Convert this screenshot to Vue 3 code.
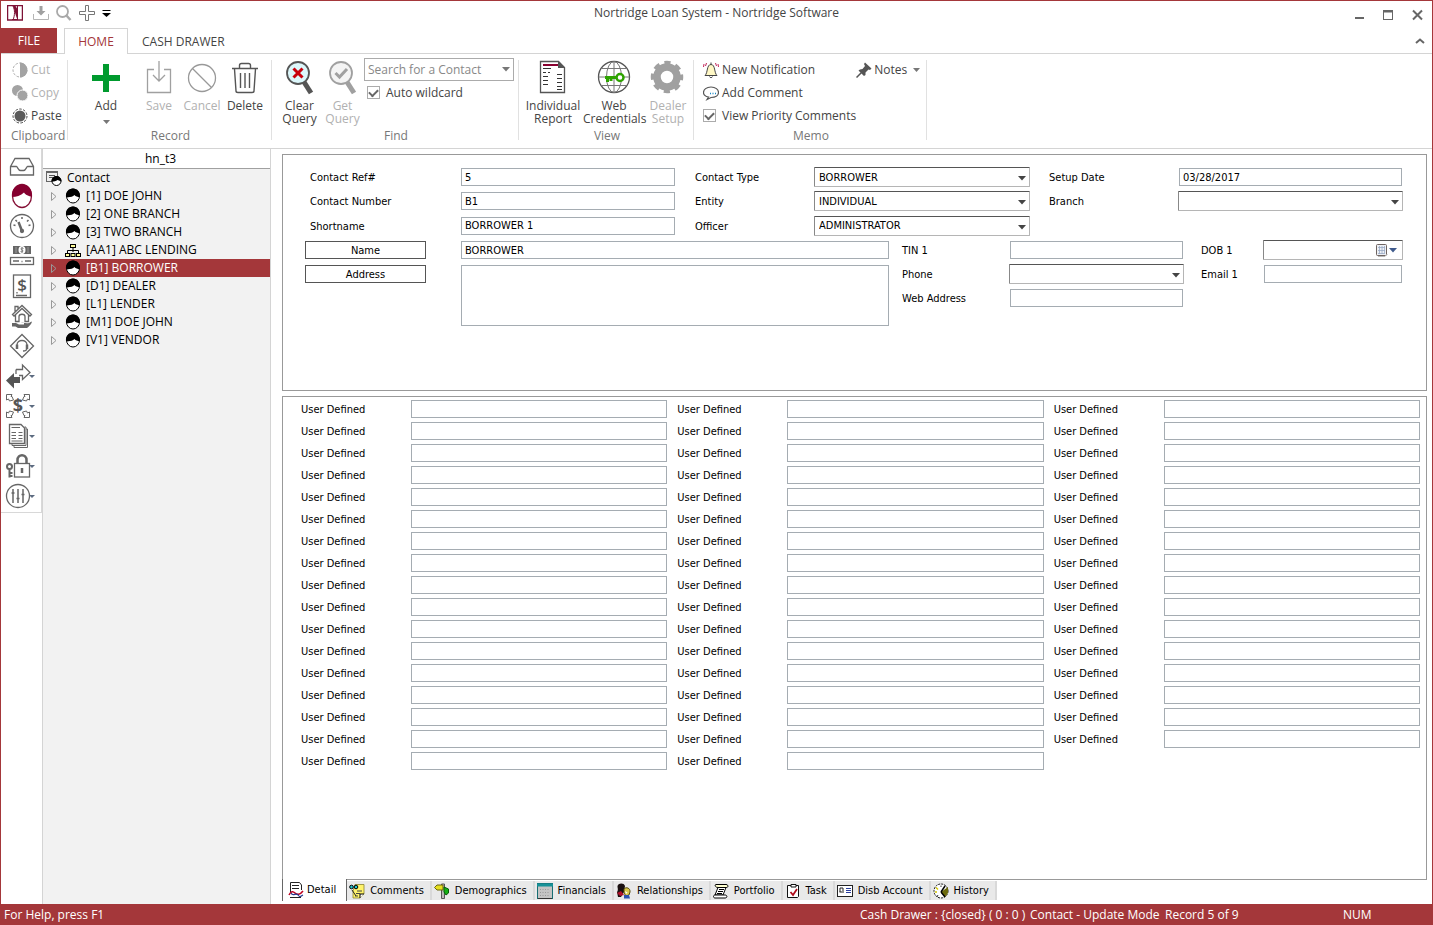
<script setup>
import { ref } from 'vue'

const sideTools = [
  { name: 'Inbox', svg: '<path d="M3.5 15.5L8 7.5H22L26.5 15.5V24H3.5ZM3.5 15.5H9.5C10.5 15.5 11 19.500 13.500 19.500H16.500C19 19.500 19.500 15.500 20.500 15.500H26.500"/>' },
  { name: 'Contacts', svg: '<ellipse cx="15" cy="15" rx="9.500" ry="11.500" stroke="#850f35" fill="#fff"/><path d="M5 16C4 8 9 3.500 15 3.500S26 8 25 16C22 15 18 14 17 11.500C14 14.500 9 16 5 16Z" fill="#85002f" stroke="none"/>' },
  { name: 'Dashboard', svg: '<circle cx="15" cy="15" r="11.500"/><circle cx="15" cy="20" r="1.500" fill="#666"/><path d="M11.500 11L15 20" stroke-width="2.500"/><path d="M6.500 14L8.500 14.500M8.500 9L10 10.500M15 6V8M21.500 9L20 10.500M23.500 14L21.500 14.500" stroke-width="1.500"/>' },
  { name: 'Cash drawer', svg: '<rect x="6" y="5" width="18" height="8" fill="#666" stroke="none"/><ellipse cx="15" cy="9" rx="3.500" ry="4" fill="#fff" stroke="none"/><path d="M16.500 7.500C14 6 13 8.500 15 9S16 11.500 13.500 10.500M15 6V12" stroke-width="0.800"/><path d="M9 6V12M21 6V12" stroke="#aaa" stroke-width="0.800"/><rect x="3.500" y="16.500" width="23" height="7"/><path d="M6 20H12M18 20H24M14.500 20.500H15.500" />' },
  { name: 'Loans', svg: '<rect x="6.500" y="4" width="17" height="22.500"/><text x="15" y="20" text-anchor="middle" font-size="17" font-family="Open Sans, sans-serif" font-weight="600" fill="#555" stroke="none">$</text><path d="M9 24.500H20M10 21V22.500" stroke-width="1.300"/>' },
  { name: 'Collateral', svg: '<path d="M5.500 13.500L15 4.500L24.500 13.500L23 15L15 7.500L7 15ZM8.500 14V20.500H12V15.500C12 12.500 18 12.500 18 15.500V20.500H21.500V14M8 10.500V5.500H11V8"/><path d="M5 22H9L12 23.500H17V22H14C18 21 20 24 24.500 20.500C25.500 21 24 24 20 27H11L8.500 25.500H5Z" fill="#666" stroke="none"/>' },
  { name: 'Support', svg: '<path d="M15 3.500L26.500 15L15 26.500L3.500 15Z"/><path d="M10 17V14C10 8 20 8 20 14V17C20 19.500 18 20 16 20"/><path d="M10 13.500V18M20 13.500V18" stroke-width="2.500"/>' },
  { name: 'Transactions', menu: true, svg: '<path d="M13 8.500H19.500V4L27 11.500L19.500 18.500V14.500H16" /><path d="M3 19.500L11 12V16H17V22H11V27.500Z" fill="#555" stroke="none"/><path d="M13 8.500V13"/>' },
  { name: 'Payments', menu: true, svg: '<path d="M3.500 9V3.500H9M3.500 9L5.500 8L6.500 10L10.500 9L9 5.500L8 5.500L9 3.500M21 3.500H26.500V9M26.500 9L24.500 8L23.500 10L19.500 9L21 5.500L22 5.500L21 3.500M3.500 21V26.500H9M3.500 21L5.500 22L6.500 20L10.500 21L9 24.500L8 24.500L9 26.500M26.500 21V26.500H21M26.500 21L24.500 22L23.500 20L19.500 21L21 24.500L22 24.500L21 26.500" stroke-width="1"/><text x="15" y="21" text-anchor="middle" font-size="18" font-family="Open Sans, sans-serif" font-weight="700" fill="#555" stroke="none">$</text>' },
  { name: 'Reports', menu: true, svg: '<path d="M6.500 3.500H18L21.500 7V22.500H6.500Z"/><path d="M21.500 6H23V24.500H9V22.500M23 8H24.500V26.500H11V24.500" stroke-width="1"/><path d="M8.500 6.500H17M8.500 11.500H13M15.500 11.500H19.500M8.500 14.500H13M15.500 14.500H19.500M8.500 17.500H13M15.500 17.500H19.500M8.500 20H19.500" stroke-width="1"/>' },
  { name: 'Security', menu: true, svg: '<rect x="11.500" y="12.500" width="15" height="13.500"/><path d="M14.500 12V9C14.500 2.500 23.500 2.500 23.500 9V12" stroke-width="2.500"/><path d="M19 17V22" stroke-width="2.500"/><circle cx="6.500" cy="15.500" r="2.500" stroke-width="2"/><path d="M6.500 18V26.500M6.500 22H9.500M6.500 25H9.500" stroke-width="2"/>' },
  { name: 'Settings', menu: true, svg: '<circle cx="15" cy="15" r="11.500"/><path d="M10 8V22M15 8V22M20 8V22M8.500 12H11.500M13.500 17.500H16.500M18.500 13.500H21.500" stroke-width="1.500"/>' },
]

const head = '<ellipse cx="8" cy="8" rx="6.500" ry="7" fill="#fff" stroke="#000" stroke-width="1"/><path d="M1 9C0.500 4 3.500 0.500 8 0.500S15.500 4 15 9C12.500 9 10.500 8.500 9.500 7C7.500 9 4 9.500 1 9Z" fill="#000"/>'
const org = '<path d="M8 5V10M2.500 11V8.500H13.500V11" fill="none" stroke="#000"/><rect x="5.500" y="2.500" width="5" height="3" fill="#fffd9c" stroke="#000"/><rect x="0.500" y="11.500" width="4" height="3" fill="#fffd9c" stroke="#000"/><rect x="6" y="11.500" width="4" height="3" fill="#fffd9c" stroke="#000"/><rect x="11.500" y="11.500" width="4" height="3" fill="#fffd9c" stroke="#000"/>'

const contacts = [
  { label: '[1] DOE JOHN', icon: head },
  { label: '[2] ONE BRANCH', icon: head },
  { label: '[3] TWO BRANCH', icon: head },
  { label: '[AA1] ABC LENDING', icon: org },
  { label: '[B1] BORROWER', icon: head },
  { label: '[D1] DEALER', icon: head },
  { label: '[L1] LENDER', icon: head },
  { label: '[M1] DOE JOHN', icon: head },
  { label: '[V1] VENDOR', icon: head },
]
const selected = ref(4)

const userColumns = [17, 17, 16]

const views = [
  { label: 'Detail', icon: '<path d="M2.500 10V0.500H11.500L13.500 3V8" fill="#fff" stroke="#222"/><path d="M4 3.500H11M4 6.500H11" stroke="#222"/><path d="M1 13C3 9 5 9 7 11S12 13 15 9" fill="none" stroke="#c00020" stroke-width="1.500"/><path d="M3 11C5 15 8 10 10 13S13 14 15 13" fill="none" stroke="#223a90" stroke-width="1.200"/><path d="M2 15.500H13" stroke="#222"/>' },
  { label: 'Comments', icon: '<path d="M6 1.500H15V11L11 15H4V8Z" fill="#fff36b" stroke="#8a8430" stroke-width="0.800"/><path d="M8 8H13M7 10.500H11M6 13H9" stroke="#444"/><circle cx="2.500" cy="4" r="1.800" fill="#20c8d0" stroke="#000"/><circle cx="7" cy="4" r="1.800" fill="#20c8d0" stroke="#000"/><path d="M3 7L7 13" stroke="#222"/><path d="M15 11L11 11V15" fill="#fff" stroke="#000"/>' },
  { label: 'Demographics', icon: '<path d="M7.500 1H10.500V15.500H7.500Z" fill="#bbb" stroke="#555"/><path d="M0.500 4.500L3 2H9V7H3Z" fill="#e6df20" stroke="#6b6710"/><path d="M10 4L14.500 6V10L12 12L10 9Z" fill="#13b013" stroke="#075c07"/>' },
  { label: 'Financials', icon: '<rect x="0.500" y="0.500" width="15" height="15" fill="#c4c4c4" stroke="#176d72"/><path d="M0 2H16" stroke="#179197" stroke-width="3"/><path d="M3 6.500H13M3 9.500H13M3 12.500H13" stroke="#999" stroke-dasharray="1 1.500"/><path d="M1 15.500H15" stroke="#333"/>' },
  { label: 'Relationships', icon: '<path d="M1 9C2 8 2 6 1.500 4C1 0 8 -1 9 3L8 9L5 14H2Z" fill="#1a1010"/><path d="M1 10L5 8L8 12L4 13Z" fill="#b0102a"/><path d="M8 6C10 3.500 14.500 5 14 9L13 12L10 13L8 10Z" fill="#d9c84a" stroke="#54480b"/><path d="M8 12L13 12L14 15.500H8Z" fill="#2c52b0"/><path d="M9 8L11.500 9.500L10 11Z" fill="#fff"/>' },
  { label: 'Portfolio', icon: '<path d="M3 1.500H13C15.500 1.500 15.500 4.500 13.500 4.500H5C2 4.500 1.500 1.500 3 1.500Z" fill="#ffffd0" stroke="#000"/><path d="M5 4.500H13L10 12H2Z" fill="#fff" stroke="#000"/><path d="M6 6.500H11M5 8.500H10M4 10.500H9" stroke="#000"/><path d="M2 12H12C14.500 12 14.500 15 12 15H2C0 15 0 12 2 12Z" fill="#fff" stroke="#000"/>' },
  { label: 'Task', icon: '<path d="M2.500 2.500H13.500V13.500L12.500 14.500H2.500Z" fill="#fff" stroke="#111"/><path d="M6 4V1.500H11V4Z" fill="#fff" stroke="#111"/><path d="M5.500 9L8 12L12 6" fill="none" stroke="#b00d1c" stroke-width="1.800"/>' },
  { label: 'Disb Account', icon: '<rect x="0.500" y="2.500" width="15" height="11" fill="#fff" stroke="#222"/><path d="M3 9V5H6V8M2.500 9H7" fill="none" stroke="#222"/><path d="M9 5.500H14M9 7.500H14M9 9.500H14" stroke="#2a3f9d"/>' },
  { label: 'History', icon: '<circle cx="8" cy="8" r="7" fill="#fff" stroke="#111" stroke-dasharray="2 1"/><path d="M8 9L15 4L15 10L12 14Z" fill="#6c6a0c"/><path d="M8 9L12 3M8 9L12 14" stroke="#000" stroke-width="1.500"/><path d="M3 4.500L5 6.500M2 9H4" stroke="#d4c800" stroke-width="1.500"/><path d="M8 2.500V4M5 12L4 14" stroke="#333"/>' },
]
const activeView = ref(0)
</script>

<template>
  <div class="window">
    <header class="titlebar">
      <div class="quick">
        <svg class="logo" width="16" height="16" viewBox="0 0 16 16"><rect x="0.500" y="0.500" width="15" height="14.500" fill="#fff" stroke="#7d1236" stroke-width="1.500"/><path d="M10.500 1V15M5 14.500H11" stroke="#7d1236"/><path d="M6 1C8 5 8 10 6 15" fill="none" stroke="#7d1236"/><path d="M6 1H8.500L11 5V15C8.500 12 8 5 6 1Z" fill="#7d1236"/></svg>
        <button aria-label="Save"><svg width="16" height="16" viewBox="0 0 16 16"><path d="M6.500 1H9.500V6H12.500L8 10.500L3.500 6H6.500Z" fill="#a0a0a0"/><path d="M0.500 9V14.500H15.500V9" fill="none" stroke="#b5b5b5"/></svg></button>
        <button aria-label="Find"><svg width="16" height="16" viewBox="0 0 16 16"><circle cx="6.500" cy="6.500" r="5.500" fill="none" stroke="#a9a9a9" stroke-width="1.800"/><path d="M10 10L14.500 15" stroke="#a9a9a9" stroke-width="2.500"/></svg></button>
        <button aria-label="New"><svg width="16" height="16" viewBox="0 0 16 16"><path d="M6.500 0.500H9.500V6.500H15.500V9.500H9.500V15.500H6.500V9.500H0.500V6.500H6.500Z" fill="#fff" stroke="#777"/></svg></button>
        <button aria-label="Customize toolbar"><svg width="9" height="16" viewBox="0 0 9 16"><path d="M0.500 5.500H8.500" stroke="#000"/><path d="M0 8H9L4.500 12Z"/></svg></button>
      </div>
      <h1>Nortridge Loan System - Nortridge Software</h1>
      <div class="controls">
        <button aria-label="Minimize"><svg width="12" height="12" viewBox="0 0 12 12"><path d="M1 9H10" stroke="#666" stroke-width="2"/></svg></button>
        <button aria-label="Maximize"><svg width="12" height="12" viewBox="0 0 12 12"><rect x="0.500" y="1.500" width="9" height="9" fill="none" stroke="#666"/><path d="M0 2.500H10" stroke="#666" stroke-width="2"/></svg></button>
        <button aria-label="Close"><svg width="12" height="12" viewBox="0 0 12 12"><path d="M1 1.500L10 10.500M10 1.500L1 10.500" stroke="#666" stroke-width="2"/></svg></button>
      </div>
    </header>

    <nav class="ribbon-tabs">
      <button class="file">FILE</button>
      <button class="home">HOME</button>
      <button class="plain">CASH DRAWER</button>
      <button class="collapse" aria-label="Collapse ribbon"><svg width="10" height="6" viewBox="0 0 10 6"><path d="M1 5L5 1.500L9 5" fill="none" stroke="#666" stroke-width="2"/></svg></button>
    </nav>

    <section class="ribbon">
      <div class="group clipboard">
        <div class="tools stack">
          <button class="small" disabled><svg width="16" height="16" viewBox="0 0 16 16"><circle cx="8" cy="8" r="7" fill="none" stroke="#aaa" stroke-dasharray="2.500 1.500"/><path d="M8 0.500A7.500 7.500 0 0 1 8 15.500Z" fill="#a3a3a3"/></svg>Cut</button>
          <button class="small" disabled><svg width="16" height="16" viewBox="0 0 16 16"><circle cx="5.500" cy="5.500" r="5.500" fill="#a3a3a3"/><circle cx="10.500" cy="10.500" r="5.500" fill="#a3a3a3" stroke="#fff"/></svg>Copy</button>
          <button class="small"><svg width="16" height="16" viewBox="0 0 16 16"><circle cx="8" cy="8" r="7" fill="none" stroke="#444" stroke-dasharray="2.500 1.500"/><circle cx="8" cy="8" r="5.500" fill="#5a5a5a"/></svg>Paste</button>
        </div>
        <div class="caption">Clipboard</div>
      </div>

      <div class="group record">
        <div class="tools">
          <button class="big add"><svg width="38" height="40" viewBox="0 0 38 40"><path d="M16 6H22V17H33V23H22V34H16V23H5V17H16Z" fill="#009a2e"/></svg>Add<svg class="drop" width="7" height="4" viewBox="0 0 7 4"><path d="M0 0H7L3.500 4Z" fill="#777"/></svg></button>
          <button class="big" disabled><svg width="38" height="40" viewBox="0 0 38 40"><path d="M14 11.500H7.500V34.500H30.500V11.500H24M19 3V23M13 17L19 23L25 17" fill="none" stroke="#a0a0a0" stroke-width="1.300"/></svg>Save</button>
          <button class="big" disabled><svg width="38" height="40" viewBox="0 0 38 40"><circle cx="19" cy="20" r="13.500" fill="none" stroke="#999" stroke-width="1.300"/><path d="M9.500 10.500L28.500 29.500" stroke="#999" stroke-width="1.300"/></svg>Cancel</button>
          <button class="big"><svg width="38" height="40" viewBox="0 0 38 40"><path d="M6 10.500H32M8.500 11L10 33Q10 34.500 12 34.500H26Q28 34.500 28 33L29.500 11M13.500 10V7.500Q13.500 5.500 15.500 5.500H22.500Q24.500 5.500 24.500 7.500V10M14.500 15V30M19 15V30M23.500 15V30" fill="none" stroke="#555" stroke-width="1.400"/></svg>Delete</button>
        </div>
        <div class="caption">Record</div>
      </div>

      <div class="group find">
        <div class="tools">
          <button class="big"><svg width="38" height="40" viewBox="0 1 38 40"><path d="M23 25L30 36" stroke="#555" stroke-width="5"/><circle cx="17" cy="16" r="11" fill="#dcf7fb" stroke="#555" stroke-width="1.800"/><path d="M12.500 11.500L21.500 20.500M21.500 11.500L12.500 20.500" stroke="#c8000c" stroke-width="3"/></svg>Clear<br>Query</button>
          <button class="big" disabled><svg width="38" height="40" viewBox="0 1 38 40"><path d="M23 25L30 36" stroke="#a0a0a0" stroke-width="5"/><circle cx="17" cy="16" r="11" fill="#f4f4f4" stroke="#a0a0a0" stroke-width="1.800"/><path d="M11.500 16L15.500 20L23 12" fill="none" stroke="#a0a0a0" stroke-width="3"/></svg>Get<br>Query</button>
          <div class="search">
            <div class="combo">
              <input aria-label="Search for a Contact" placeholder="Search for a Contact">
              <svg width="8" height="5" viewBox="0 0 8 5"><path d="M0 0H8L4 4.500Z" fill="#777"/></svg>
            </div>
            <label class="check"><input type="checkbox" checked>Auto wildcard</label>
          </div>
        </div>
        <div class="caption">Find</div>
      </div>

      <div class="group view">
        <div class="tools">
          <button class="big"><svg width="38" height="40" viewBox="0 1 38 40"><path d="M6.500 4.500H24.500L30.500 10.500V35.500H6.500Z" fill="#fff" stroke="#555" stroke-width="1.300"/><path d="M24 4L31 11H24Z" fill="#555"/><path d="M9 8H24" stroke="#8a0030" stroke-width="2"/><path d="M9 11.500H17M9 15.500H12M14 15.500H16M9 19.500H14M9 23.500H14M9 27.500H14M23 17.500H28M23 21.500H28M23 25.500H28M23 29.500H28M23 32.500H28" stroke="#333"/></svg>Individual<br>Report</button>
          <button class="big"><svg width="38" height="40" viewBox="0 1 38 40"><g fill="none" stroke="#777"><circle cx="19" cy="20" r="15.500" stroke="#555" stroke-width="1.300"/><ellipse cx="19" cy="20" rx="7.500" ry="15.500"/><path d="M19 4.500V35.500M3.500 20H34.500M6.500 11.500H31.500M6.500 28.500H31.500"/></g><path d="M10 20.500H23M12.500 20V25M16 20V24" stroke="#2ea300" stroke-width="3"/><circle cx="25" cy="20.500" r="3.500" fill="#fff" stroke="#2ea300" stroke-width="2.500"/></svg>Web<br>Credentials</button>
          <button class="big" disabled><svg width="38" height="40" viewBox="1 1 38 40"><circle cx="19" cy="20" r="10" fill="none" stroke="#a0a0a0" stroke-width="7.500"/><circle cx="19" cy="20" r="14" fill="none" stroke="#a0a0a0" stroke-width="4.500" stroke-dasharray="6 5" stroke-dashoffset="3"/></svg>Dealer<br>Setup</button>
        </div>
        <div class="caption">View</div>
      </div>

      <div class="group memo">
        <div class="tools memo-tools">
          <div class="stack">
            <button class="small"><svg width="16" height="16" viewBox="0 0 16 16"><path d="M2 13.500C5 11 3.500 2.500 8 2.500S11 11 14 13.500Z" fill="#fff8c5" stroke="#444"/><path d="M6.500 14.500C7 16 9 16 9.500 14.500M8 2.500V0.500" fill="none" stroke="#444"/><path d="M3.500 1L2.500 4M1 2L0.500 5M12.500 1L13.500 4M15 2L15.500 5" stroke="#c22457"/></svg>New Notification</button>
            <button class="small"><svg width="16" height="16" viewBox="0 0 16 16"><path d="M5.500 12L4 14.500L8 12.500C13 12.500 15.500 10 15.500 7.500C15.500 4.500 12.500 2 8 2S0.500 4.500 0.500 7.500C0.500 9.500 2.500 11.500 5.500 12Z" fill="#fff" stroke="#555" stroke-width="1.200"/><path d="M7 8.500H8M9.500 8.500H10.500M12 8.500H13" stroke="#1687c5" stroke-width="1.300"/></svg>Add Comment</button>
            <label class="check wide"><input type="checkbox" checked>View Priority Comments</label>
          </div>
          <button class="small notes"><svg width="16" height="16" viewBox="0 0 16 16"><path d="M9 0.500L15.500 6.500L14 8L12.500 7.500L9.500 10.500L9.500 13L8 14L2.500 8.500L4 7.500L6.500 7L9 4L8 2Z" fill="#555"/><path d="M5.500 10.500L0.500 15.500" stroke="#555" stroke-width="1.500"/></svg>Notes<svg width="7" height="4" viewBox="0 0 7 4"><path d="M0 0H7L3.500 4Z" fill="#777"/></svg></button>
        </div>
        <div class="caption">Memo</div>
      </div>
    </section>

    <main class="body">
      <nav class="sidebar">
        <button v-for="tool in sideTools" :key="tool.name" :class="{ menu: tool.menu }" :aria-label="tool.name">
          <svg width="30" height="30" viewBox="0 0 30 30" fill="none" stroke="#666" stroke-width="1.300" v-html="tool.svg"></svg>
          <svg v-if="tool.menu" class="arrow" width="6" height="3" viewBox="0 0 6 3"><path d="M0 0H6L3 3Z" fill="#5c6b80"/></svg>
        </button>
      </nav>

      <aside class="tree">
        <h2>hn_t3</h2>
        <div class="root"><svg width="16" height="16" viewBox="0 0 16 16"><rect x="0.500" y="1.500" width="11" height="10" fill="#eee" stroke="#666"/><path d="M0.500 2H12" stroke="#666" stroke-width="2"/><path d="M3 5.500H9M3 7.500H7" stroke="#555"/><circle cx="10.500" cy="11" r="4.500" fill="#fff" stroke="#000"/><path d="M5.500 11.500C5.500 4 15.500 4 15.500 11.500L11.500 10C10 11.500 8 11.500 5.500 11.500Z"/></svg>Contact</div>
        <ul>
          <li v-for="(c, i) in contacts" :key="c.label">
            <button :class="{ selected: i === selected }" @click="selected = i">
              <svg width="6" height="9" viewBox="0 0 6 9"><path d="M0.500 0.500L5 4.500L0.500 8.500Z" fill="none" stroke="#999"/></svg>
              <svg width="16" height="16" viewBox="0 0 16 16" v-html="c.icon"></svg>
              <span>{{ c.label }}</span>
            </button>
          </li>
        </ul>
      </aside>

      <div class="content">
        <section class="panel summary">
          <div class="grid top">
            <label for="ref">Contact Ref#</label><input id="ref" value="5">
            <label for="type">Contact Type</label>
            <div class="select"><select id="type"><option>BORROWER</option></select><svg width="8" height="5" viewBox="0 0 8 5"><path d="M0 0H8L4 4.500Z"/></svg></div>
            <label for="setup">Setup Date</label><input id="setup" value="03/28/2017">
            <label for="number">Contact Number</label><input id="number" value="B1">
            <label for="entity">Entity</label>
            <div class="select"><select id="entity"><option>INDIVIDUAL</option></select><svg width="8" height="5" viewBox="0 0 8 5"><path d="M0 0H8L4 4.500Z"/></svg></div>
            <label for="branch">Branch</label>
            <div class="select"><select id="branch"><option></option></select><svg width="8" height="5" viewBox="0 0 8 5"><path d="M0 0H8L4 4.500Z"/></svg></div>
            <label for="short">Shortname</label><input id="short" value="BORROWER 1">
            <label for="officer">Officer</label>
            <div class="select"><select id="officer"><option>ADMINISTRATOR</option></select><svg width="8" height="5" viewBox="0 0 8 5"><path d="M0 0H8L4 4.500Z"/></svg></div>
          </div>
          <div class="grid lower">
            <button>Name</button><input aria-label="Name" value="BORROWER">
            <label for="tin">TIN 1</label><input id="tin">
            <label for="dob">DOB 1</label>
            <div class="select date"><input id="dob"><svg width="22" height="14" viewBox="0 0 22 14"><rect x="0.500" y="0.500" width="10" height="11" rx="1" fill="#edf0f5" stroke="#6e6461"/><path d="M2 3.500H9M2 6.500H9M2 9.500H8M3.500 2V10M6 2V10M8.500 2V10" stroke="#9aabc5" stroke-width="0.800" fill="none"/><path d="M2 12.500H9L11.500 10" fill="none" stroke="#bbb"/><path d="M13 4H21L17 8.500Z" fill="#3f5a8c"/></svg></div>
            <button>Address</button><textarea aria-label="Address"></textarea>
            <label for="phone">Phone</label>
            <div class="select"><select id="phone"><option></option></select><svg width="8" height="5" viewBox="0 0 8 5"><path d="M0 0H8L4 4.500Z"/></svg></div>
            <label for="email">Email 1</label><input id="email">
            <label for="web" class="web">Web Address</label><input id="web">
          </div>
        </section>

        <section class="panel detail">
          <div v-for="(count, c) in userColumns" :key="c" class="user-column">
            <div v-for="n in count" :key="n" class="user-row">
              <label :for="`user-${c}-${n}`">User Defined</label>
              <input :id="`user-${c}-${n}`">
            </div>
          </div>
        </section>

        <nav class="views">
          <button v-for="(v, i) in views" :key="v.label" :class="{ active: i === activeView }" @click="activeView = i">
            <svg width="16" height="16" viewBox="0 0 16 16" fill="#000" v-html="v.icon"></svg>{{ v.label }}
          </button>
        </nav>
      </div>
    </main>

    <footer class="status">
      <span class="help">For Help, press F1</span>
      <span class="drawer">Cash Drawer : {closed} ( 0 : 0 )</span>
      <span class="mode">Contact - Update Mode</span>
      <span class="count">Record 5 of 9</span>
      <span class="num">NUM</span>
    </footer>
  </div>
</template>

<style>
body { background: #fff; }
</style>

<style scoped>
.window {
  --ui: "Open Sans", "Noto Sans", sans-serif;
  --form: "DejaVu Sans Condensed", "DejaVu Sans", sans-serif;
  --red: #a4373a;
  box-sizing: border-box;
  min-height: 100vh;
  display: flex;
  flex-direction: column;
  border: solid var(--red);
  border-width: 1px 1px 0;
  background: #fff;
  color: #444;
  font: 12px/16px var(--ui);
}
.window * { box-sizing: border-box; }
button { padding: 0; border: 0; background: none; color: inherit; font: inherit; }
button:disabled { color: #b1b1b1; }
svg { display: block; flex: none; }
h1, h2 { margin: 0; font: inherit; }

.titlebar { display: grid; grid-template-columns: 1fr auto 1fr; align-items: center; height: 27px; padding-bottom: 3px; }
.quick { display: flex; align-items: center; gap: 7px; padding-left: 6px; }
.logo { margin-right: 3px; }
.controls { display: flex; justify-content: flex-end; gap: 17px; padding: 3px 8px 0 0; }

.ribbon-tabs { display: flex; height: 26px; margin-bottom: -1px; position: relative; }
.ribbon-tabs button { height: 26px; padding-top: 2px; }
.ribbon-tabs .file { width: 56px; height: 25px; padding-top: 0; background: var(--red); color: #fff; }
.ribbon-tabs .home { width: 64px; margin: 0 14px 0 7px; padding-top: 1px; border: 1px solid #d4d4d4; border-bottom: 0; background: #fff; color: var(--red); }
.ribbon-tabs .collapse { margin-left: auto; padding: 0 7px 0 0; }

.ribbon { display: flex; height: 96px; padding: 4px 0 6px; border: solid #d4d4d4; border-width: 1px 0; }
.group { display: flex; flex-direction: column; border-right: 1px solid #e1e1e1; margin: 2px 0 2px; }
.tools { display: flex; flex: 1; align-items: flex-start; margin-top: -2px; }
.caption { text-align: center; color: #777; line-height: 13px; margin-bottom: -2px; padding-left: 2px; }
.clipboard { width: 67px; padding-left: 5px; }
.record { width: 204px; }
.record .tools { gap: 1px; padding-left: 7px; }
.find { width: 247px; }
.find .tools { padding-left: 6px; }
.view { width: 175px; }
.view .tools { padding-left: 4px; }
.memo { width: 233px; }
.stack { display: flex; flex-direction: column; align-items: flex-start; }
.clipboard .stack { padding-left: 6px; }
.clipboard .caption { text-align: left; padding-left: 5px; }
.small { display: flex; align-items: center; gap: 3px; height: 23px; white-space: nowrap; }
.big { width: 43px; line-height: 13px; text-align: center; white-space: nowrap; }
.big svg { margin: 0 auto 1px; height: 40px; }
.record .big { width: 42px; }
.record .add { width: 62px; }
.big .drop { height: 4px; margin: 8px auto 0; }
.view .big:nth-child(1) { width: 60px; }
.view .big:nth-child(2) { width: 62px; }
.view .big:nth-child(3) { width: 46px; }
.search { width: 150px; }
.combo { position: relative; }
.combo input { width: 100%; height: 23px; padding: 0 20px 0 3px; border: 1px solid #ababab; font: inherit; color: #444; outline: 0; }
.combo input::placeholder { color: #888; opacity: 1; }
.combo svg { position: absolute; right: 4px; top: 9px; }
.check { display: flex; align-items: center; gap: 6px; height: 23px; padding-left: 3px; white-space: nowrap; }
.check.wide { padding-left: 0; }
.check input { appearance: none; display: grid; place-items: center; width: 13px; height: 13px; margin: 0; border: 1px solid #ababab; background: #fff; }
.check input:checked::before { content: ""; width: 7px; height: 4px; border: solid #666; border-width: 0 0 2px 2px; transform: translateY(-1px) rotate(-45deg); }
.memo-tools { justify-content: space-between; padding: 0 6px 0 9px; }
.notes { gap: 2px; }
.notes svg:last-child { margin-left: 4px; }

.body { display: flex; flex: 1; }
.sidebar { align-self: flex-start; display: flex; flex-direction: column; width: 41px; padding: 2px 0 1px; border: solid #d8d8d8; border-width: 0 1px 1px 0; }
.sidebar button { display: flex; align-items: center; height: 30px; padding-left: 6px; }
.sidebar .menu { padding-left: 2px; }
.sidebar .arrow { margin-left: -4px; }
.tree { width: 229px; border: solid #d4d4d4; border-width: 0 1px; background: #f2f2f2; color: #000; }
.tree h2 { height: 20px; padding-left: 8px; border-bottom: 1px solid #a0a0a0; background: #fff; text-align: center; line-height: 20px; }
.tree ul { margin: 0; padding: 0; list-style: none; }
.tree .root { display: flex; align-items: center; gap: 5px; height: 18px; padding-left: 3px; }
.tree li button { display: flex; align-items: center; width: 100%; height: 18px; padding-left: 8px; text-align: left; }
.tree li svg + svg { margin: 0 5px 0 8px; }
.tree .selected { background: var(--red); color: #fff; }

.content { flex: 1; min-width: 0; display: flex; flex-direction: column; padding: 5px 5px 3px 11px; color: #000; font: 11px/14px var(--form); }
.panel { border: 1px solid #999; }
.panel label { padding-top: 2px; }
.summary { min-height: 237px; margin-bottom: 5px; padding: 10px 23px 0 22px; }
.grid { display: grid; align-items: center; }
.top { grid-template-columns: 155px 216fr 138px 216fr 148px 225fr; grid-template-rows: 24px 24px 25px; }
.lower { grid-template-columns: 155px 430fr 119px 175fr 79px 140fr; grid-template-rows: 24px 24px 24px; }
.grid label { padding-left: 5px; }
.top label ~ label { padding-left: 19px; }
.top label[for="number"], .top label[for="short"] { padding-left: 5px; }
.lower label { padding-left: 12px; }
.lower label[for="dob"], .lower label[for="email"] { padding-left: 17px; }
.lower .web { grid-column: 3; }
.lower button { width: 121px; height: 18px; padding-top: 1px; border: 1px solid #555; background: #fff; }
.panel input, .panel textarea { height: 18px; min-width: 0; margin: 0 1px; padding: 0 3px; border: 1px solid #a5acb2; border-radius: 0; background: #fff; color: #000; font: inherit; outline: 0; }
.panel textarea { grid-row: 2 / 5; grid-column: 2; align-self: start; height: 61px; margin-top: 3px; resize: none; }
.select { position: relative; }
.select select, .panel .date input { display: block; appearance: none; width: 100%; height: 20px; margin: 0; padding: 1px 20px 0 4px; border: 1px solid #b5b5b5; border-top-color: #555; border-left-color: #888; border-radius: 1px; background: #fff; color: #000; font: inherit; outline: 0; }
.select svg { position: absolute; right: 4px; top: 9px; fill: #444; pointer-events: none; }
.date svg { top: 4px; right: 5px; }

.detail { flex: 1; display: grid; grid-template-columns: repeat(3, 1fr); gap: 10px; padding: 1px 6px 0 18px; }
.user-row { display: grid; grid-template-columns: 110px 1fr; align-items: center; height: 22px; }
.user-row input { margin: 0; }

.views { display: flex; align-items: flex-start; height: 21px; }
.views button { display: flex; align-items: center; gap: 5px; height: 19px; margin-top: 1px; padding: 0 6px 0 2px; border-right: 2px solid #d9d9d9; background: #e9e9e9; white-space: nowrap; }
.views .active { height: 22px; margin-top: -1px; padding: 0 10px 0 5px; gap: 3px; border: solid #666; border-width: 0 1px; background: #fff; }

.status { display: flex; align-items: center; height: 21px; padding-left: 3px; background: var(--red); color: #fff; white-space: nowrap; }
.help { flex: 1; }
.drawer { width: 170px; }
.mode { width: 135px; }
.count { width: 178px; }
.num { width: 89px; }
</style>
